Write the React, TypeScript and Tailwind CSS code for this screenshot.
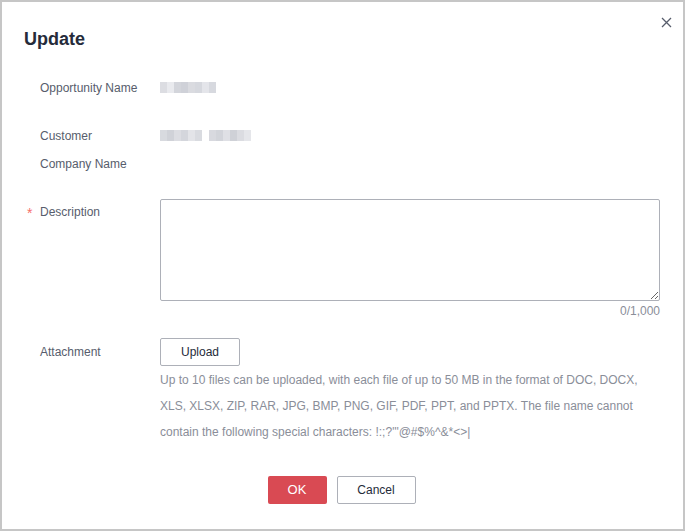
import React from 'react'

const FONT = { fontFamily: '"Liberation Sans", Arial, sans-serif' }

// blurred placeholder values, drawn as little grey tiles
function Blur({ tiles }: { tiles: string[] }) {
  return (
    <div className="flex h-[11px] mt-[8px]">
      {tiles.map((c, i) => (
        <span key={i} className={`h-full w-[7px] ${c}`} />
      ))}
    </div>
  )
}

const BLUR_A = ['bg-[#dcdde2]', 'bg-[#e9eaee]', 'bg-[#d3d5db]', 'bg-[#cfd1d8]', 'bg-[#dadbe0]', 'bg-[#d6d8de]', 'bg-[#e4e5ea]', 'bg-[#d7d9df]']
const BLUR_B = ['bg-[#d8dadf]', 'bg-[#d0d2d8]', 'bg-[#dcdde2]', 'bg-[#d4d6dc]', 'bg-[#e3e4e8]', 'bg-[#d9dbe0]', 'bg-white', 'bg-[#d8d9df]', 'bg-[#d2d4da]', 'bg-[#dfe0e5]', 'bg-[#cfd1d7]', 'bg-[#dbdce1]', 'bg-[#e5e6ea]']

function Label({ children, required }: { children: React.ReactNode; required?: boolean }) {
  return (
    <div className="relative w-[158px] shrink-0 pl-[38px] whitespace-nowrap text-[12px] leading-[28px] text-[#575d6c]">
      {required && <span className="absolute left-[25px] top-[1px] text-[14px] text-[#f66f6a]">*</span>}
      {children}
    </div>
  )
}

export default function App() {
  return (
    <div style={FONT} className="w-[685px] h-[531px] bg-white border-2 border-[#c6c6c6] flex flex-col">
      <div className="flex items-start justify-between">
        <h2 className="pl-[22px] pt-[25px] text-[18px] leading-[24px] font-bold text-[#252b3a]">Update</h2>
        <button className="mt-[15px] mr-[11px] p-0 text-[#575d6c]">
          <svg width="11" height="11" viewBox="0 0 11 11" fill="none" stroke="currentColor" strokeWidth="1.3">
            <path d="M1 1 L10 10 M10 1 L1 10" />
          </svg>
        </button>
      </div>

      <div className="flex flex-col mt-[23px]">
        <div className="flex">
          <Label>Opportunity Name</Label>
          <Blur tiles={BLUR_A} />
        </div>

        <div className="flex mt-[20px]">
          <Label>
            Customer
            <br />
            Company Name
          </Label>
          <Blur tiles={BLUR_B} />
        </div>

        <div className="flex mt-[20px]">
          <Label required>Description</Label>
          <div className="flex flex-col w-[500px]">
            <textarea className="mt-[1px] h-[102px] w-full border border-[#adb0b8] rounded-[2px] outline-none" />
            <div className="text-right text-[12px] leading-[20px] text-[#8a8e99]">0/1,000</div>
          </div>
        </div>

        <div className="flex mt-[17px]">
          <Label>Attachment</Label>
          <div className="flex flex-col">
            <button className="w-[80px] h-[28px] border border-[#adb0b8] rounded-[2px] bg-white text-[12px] text-[#252b3a]">
              Upload
            </button>
            <p className="mt-[1px] w-[485px] text-[12px] leading-[26px] text-[#8a8e99]">
              Up to 10 files can be uploaded, with each file of up to 50 MB in the format of DOC, DOCX, XLS, XLSX, ZIP, RAR, JPG, BMP, PNG, GIF, PDF, PPT, and PPTX. The file name cannot contain the following special characters: !:;?&quot;'@#$%^&amp;*&lt;&gt;|
            </p>
          </div>
        </div>
      </div>

      <div className="flex justify-center gap-[10px] mt-[31px] pr-[2px]">
        <button className="w-[59px] h-[28px] rounded-[2px] bg-[#d94a53] text-white text-[13px]">OK</button>
        <button className="w-[79px] h-[28px] rounded-[2px] border border-[#adb0b8] bg-white text-[12px] text-[#252b3a]">
          Cancel
        </button>
      </div>
    </div>
  )
}
